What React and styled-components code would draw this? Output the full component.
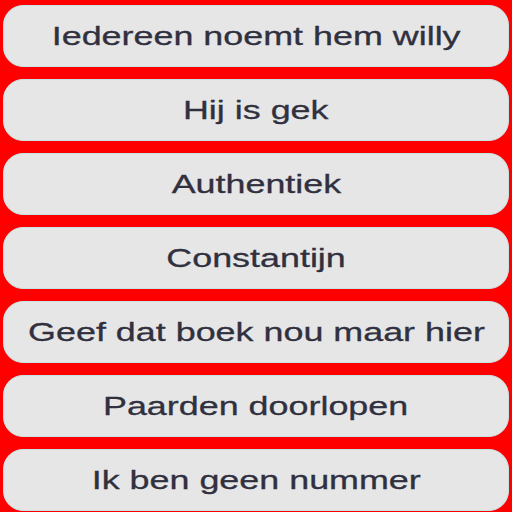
import React from "react";
import styled, { createGlobalStyle } from "styled-components";

const Global = createGlobalStyle`
  html, body { margin: 0; padding: 0; background: #ff0000; }
  body { width: 512px; height: 512px; overflow: hidden; }
`;

const List = styled.div`
  display: flex;
  flex-direction: column;
  gap: 12px;
  padding: 5px 3px 0 3px;
  box-sizing: border-box;
  width: 512px;
  height: 512px;
  background: #ff0000;
`;

const Item = styled.button`
  height: 62px;
  flex: 0 0 62px;
  width: 100%;
  box-sizing: border-box;
  border: 1px solid #c6e4e4;
  border-radius: 20px;
  background: #e6e6e6;
  color: #30303e;
  font-family: "Liberation Sans", Arial, sans-serif;
  font-size: 26px;
  display: flex;
  align-items: center;
  justify-content: center;
  padding: 0;
  overflow: hidden;
`;

const Label = styled.span`
  display: inline-block;
  white-space: nowrap;
  transform: scaleX(1.38);
  -webkit-text-stroke: 0.3px #30303e;
`;

const items = [
  "Iedereen noemt hem willy",
  "Hij is gek",
  "Authentiek",
  "Constantijn",
  "Geef dat boek nou maar hier",
  "Paarden doorlopen",
  "Ik ben geen nummer",
];

export default function App() {
  return (
    <>
      <Global />
      <List>
        {items.map((t) => (
          <Item key={t}>
            <Label>{t}</Label>
          </Item>
        ))}
      </List>
    </>
  );
}
